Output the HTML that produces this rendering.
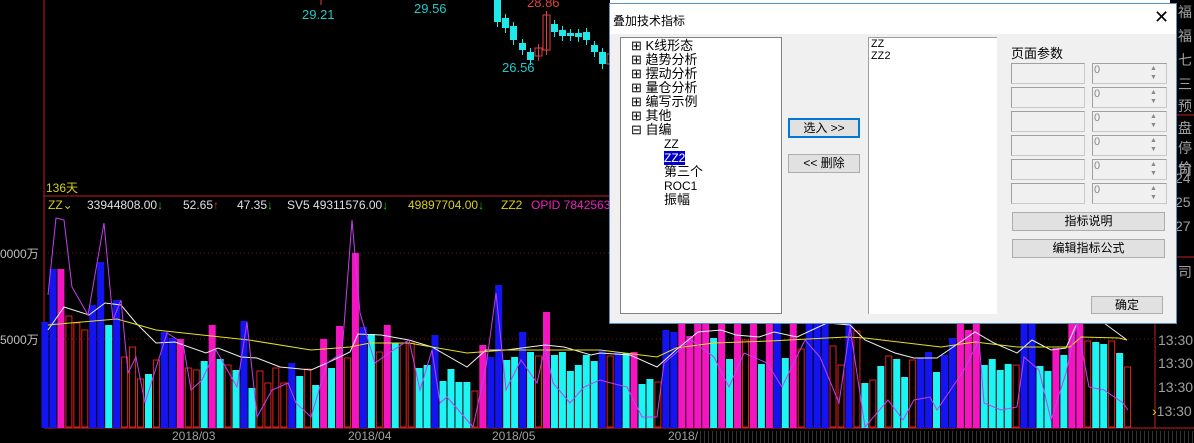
<!DOCTYPE html>
<html><head><meta charset="utf-8">
<style>
*{margin:0;padding:0;box-sizing:border-box}
html,body{width:1194px;height:443px;overflow:hidden}
body{background:#000;position:relative;font-family:"Liberation Sans","Noto Sans CJK SC",sans-serif}
.a{position:absolute;white-space:nowrap}
.dlg{position:absolute;left:609px;top:3px;width:568px;height:321px;background:#f0f0f0;border:1px solid #5a8fc0;font-size:12px;color:#000}
.box{position:absolute;background:#fff;border:1px solid #828282}
.btn{position:absolute;background:#e1e1e1;border:1px solid #adadad;text-align:center;font-size:12px;line-height:17px}
.fld{position:absolute;background:#f0f0f0;border:1px solid #c8c8c8;border-top-color:#a0a0a0;border-left-color:#a0a0a0}
.r{position:absolute;left:1158px;font-size:14px;color:#a0a0a0}
.rc{position:absolute;left:1178px;font-size:14px;color:#a0a0a0}
</style></head><body>
<svg class="a" style="left:0;top:0" width="1194" height="443">
<line x1="44" y1="0" x2="44" y2="428" stroke="#c0201c"/>
<line x1="44" y1="196" x2="1155" y2="196" stroke="#c0201c"/>
<line x1="44" y1="253" x2="1155" y2="253" stroke="#8a1010" stroke-dasharray="1 3"/>
<line x1="44" y1="339" x2="1155" y2="339" stroke="#8a1010" stroke-dasharray="1 3"/>
<line x1="44" y1="428" x2="1194" y2="428" stroke="#c0201c"/>
<line x1="1155" y1="0" x2="1155" y2="428" stroke="#c0201c"/>
<line x1="1155" y1="115" x2="1194" y2="115" stroke="#c0201c"/>
<line x1="1155" y1="257" x2="1194" y2="257" stroke="#c0201c"/>
<line x1="321" y1="0" x2="321" y2="5" stroke="#e04040"/>
<g id="bars"></g>
<g id="cand"></g>
<polyline fill="none" stroke="#f0f0f0" stroke-width="1" points="48,330 64,307 89,315 105,303 121,305 136,323 156,343 175,342 206,353 218,348 241,357 257,358 280,367 311,370 327,363 350,352 358,334 381,335 409,340 432,347 467,367 486,350 506,350 545,345 564,347 591,355 600,353 630,355 657,367 676,350 698,332 721,330 736,335 759,337 774,332 797,337 827,323 850,325 865,340 895,353 914,358 937,358 956,345 975,332 994,343 1017,353 1032,340 1051,350 1066,348 1077,323 1104,323 1127,340"/>
<polyline fill="none" stroke="#e8e020" stroke-width="1" points="48,325 70,323 117,319 156,330 202,335 249,340 311,350 350,347 370,343 409,343 467,353 506,350 600,350 657,357 676,348 714,343 770,341 846,337 865,338 941,347 975,342 1017,347 1070,347 1081,337 1119,338 1127,340"/>
<polyline fill="none" stroke="#c040f0" stroke-width="1" points="48,295 56,218 64,220 72,287 88,315 104,223 113,320 121,300 128,373 136,357 145,403 167,333 183,343 191,390 202,380 216,350 237,387 247,322 257,417 272,390 288,383 296,403 311,417 327,363 342,353 352,220 360,313 375,363 389,353 409,340 420,390 432,350 440,403 447,397 473,427 486,367 496,293 506,390 521,360 537,383 545,347 553,383 570,403 584,387 600,380 611,383 627,387 642,417 657,417 664,363 676,353 691,340 714,357 729,387 744,353 767,363 782,387 805,340 820,357 839,403 850,327 865,427 888,400 903,420 914,400 930,397 937,410 964,370 979,340 984,403 1001,410 1017,407 1024,357 1039,370 1051,420 1066,373 1077,323 1089,387 1104,390 1123,403 1128,410"/>
</svg>
<script>
var L="B322,B269,M269,R316,R323,R330,B305,B262,C325,B300,R357,R347,R379,C374,R360,B332,B338,M339,R368,R370,C361,M325,C359,R365,C370,B321,C388,R371,R383,R368,R383,B363,C376,R369,C385,M339,C368,M326,R358,M253,B327,C334,R352,M325,C343,R343,R343,C368,C365,B335,C381,C369,C382,C382,R391,M345,B357,B285,C360,C357,B332,C352,R356,M312,C355,C352,C371,C365,C355,C361,B350,R356,B352,C353,M352,C384,C379,R382,B330,B332,M300,M336,M300,M300,C338,M300,C359,M300,R340,M300,C364,M300,B300,C358,M300,R349,B300,B300,B300,R346,R365,B300,R331,C383,R380,C366,R356,C359,C377,R360,B358,B352,C372,B355,B338,M300,M330,M300,C365,C359,C370,C364,R365,B300,B300,C366,C371,M348,C355,M300,M300,R341,C342,C344,R341,C353,R367".split(",");
var col={B:"#1414f0",C:"#1ef4f4",M:"#f414c0"},s="";
L.forEach(function(t,i){var x=41.5+7.96*i,y=+t.slice(1),c=t[0];
if(c=="R")s+='<rect x="'+(x+0.5)+'" y="'+y+'" width="6" height="'+(427-y)+'" fill="none" stroke="#e0201c"/>';
else s+='<rect x="'+x+'" y="'+y+'" width="7" height="'+(428-y)+'" fill="'+col[c]+'"/>';});
document.getElementById("bars").innerHTML=s;
var C=[[494,0,22,1],[502,18,28,1],[510,26,40,1],[519,43,50,1],[527,52,60,1],[535,48,56,0],[543,15,50,0],[551,24,32,1],[559,30,36,1],[567,33,36,1],[575,33,37,1],[583,32,40,1],[591,45,52,1],[599,52,64,1],[607,54,64,0]],q="";
C.forEach(function(k){var w=k[3]?'fill="#1ee8e8"':'fill="none" stroke="#e04040"';q+='<line x1="'+(k[0]+3.5)+'" y1="'+(k[1]-4)+'" x2="'+(k[0]+3.5)+'" y2="'+(k[2]+5)+'" stroke="'+(k[3]?"#1ee8e8":"#e04040")+'"/><rect x="'+k[0]+'" y="'+k[1]+'" width="7" height="'+(k[2]-k[1])+'" '+w+'/>';});
document.getElementById("cand").innerHTML=q;
</script>
<div class="a" style="left:302px;top:7px;color:#20c8c8;font-size:13px">29.21</div>
<div class="a" style="left:414px;top:1px;color:#20c8c8;font-size:13px">29.56</div>
<div class="a" style="left:502px;top:60px;color:#20c8c8;font-size:13px">26.56</div>
<div class="a" style="left:527px;top:-5px;color:#e04040;font-size:13px">28.86</div>
<div class="a" style="left:46px;top:179px;color:#d8d020;font-size:12px">136天</div>
<div class="a" style="left:48px;top:198px;font-size:12px;color:#d8d020">ZZ⌄</div>
<div class="a" style="left:87px;top:198px;font-size:12px;color:#e0e0e0">33944808.00<span style="color:#20c020">↓</span></div>
<div class="a" style="left:183px;top:198px;font-size:12px;color:#e0e0e0">52.65<span style="color:#e03030">↑</span></div>
<div class="a" style="left:237px;top:198px;font-size:12px;color:#e0e0e0">47.35<span style="color:#20c020">↓</span></div>
<div class="a" style="left:287px;top:198px;font-size:12px;color:#e0e0e0">SV5 49311576.00<span style="color:#20c020">↓</span></div>
<div class="a" style="left:408px;top:198px;font-size:12px;color:#d8d020">49897704.00<span style="color:#20c020">↓</span></div>
<div class="a" style="left:501px;top:198px;font-size:12px;color:#d8d020">ZZ2</div>
<div class="a" style="left:531px;top:198px;font-size:12px;color:#f020c0">OPID 7842563</div>
<div class="a" style="left:0;top:245px;font-size:12px;color:#c0c0c0">0000万</div>
<div class="a" style="left:0;top:331px;font-size:12px;color:#c0c0c0">5000万</div>
<div class="a" style="left:172px;top:429px;font-size:12px;color:#a0a0a0">2018/03</div>
<div class="a" style="left:348px;top:429px;font-size:12px;color:#a0a0a0">2018/04</div>
<div class="a" style="left:492px;top:429px;font-size:12px;color:#a0a0a0">2018/05</div>
<div class="a" style="left:668px;top:429px;font-size:12px;color:#a0a0a0">2018/</div>
<div class="a" style="left:700px;top:431px;width:494px;height:12px;background:repeating-linear-gradient(90deg,#333 0 1px,#000 1px 4px)"></div>
<div class="r" style="top:284px">:30</div>
<div class="r" style="top:308px">:30</div>
<div class="r" style="top:332px">13:30</div>
<div class="r" style="top:355px">13:30</div>
<div class="r" style="top:379px">13:30</div>
<div class="r" style="top:403px"><span style="color:#d8d020;margin-left:-6px">›</span>13:30</div>
<div class="rc" style="top:2px">福</div><div class="rc" style="top:26px">福</div><div class="rc" style="top:50px">七</div><div class="rc" style="top:74px">三</div><div class="rc" style="top:96px">预</div><div class="rc" style="top:118px">盘</div><div class="rc" style="top:138px">停价</div><div class="rc" style="top:160px">司</div><div class="rc" style="top:170px;left:1175px">24</div><div class="rc" style="top:194px;left:1175px">25</div><div class="rc" style="top:218px;left:1175px">27</div><div class="rc" style="top:262px">司</div>
<div class="a" style="left:610px;top:0;width:560px;height:4px;background:#fff"></div>
<div class="dlg">
<div class="a" style="left:0;top:0;width:566px;height:30px;background:#fff"></div>
<div class="a" style="left:3px;top:8px;font-size:12px">叠加技术指标</div>
<div class="a" style="left:544px;top:3px;font-size:18px;font-weight:300">✕</div>
<div class="box" style="left:10px;top:33px;width:162px;height:277px"></div>
<div class="a" style="left:21px;top:35px;font-size:13px;line-height:14px">
<div>⊞ K线形态</div><div>⊞ 趋势分析</div><div>⊞ 摆动分析</div><div>⊞ 量仓分析</div><div>⊞ 编写示例</div><div>⊞ 其他</div><div>⊟ 自编</div>
<div style="padding-left:33px;font-size:12px">ZZ</div><div style="padding-left:33px;font-size:12px"><span style="background:#0000c8;color:#fff">ZZ2</span></div><div style="padding-left:33px">第三个</div><div style="padding-left:33px;font-size:12px">ROC1</div><div style="padding-left:33px">振幅</div></div>
<div class="btn" style="left:178px;top:114px;width:72px;height:20px;border:2px solid #0078d7">选入 &gt;&gt;</div>
<div class="btn" style="left:178px;top:150px;width:72px;height:19px">&lt;&lt; 删除</div>
<div class="box" style="left:258px;top:33px;width:129px;height:277px;border-color:#a0a0a0;border-right:none;border-bottom:none"></div>
<div class="a" style="left:261px;top:35px;font-size:11px;line-height:12px;font-family:'Liberation Mono',monospace">ZZ<br>ZZ2</div>
<div class="a" style="left:401px;top:39px;font-size:13px">页面参数</div>
<div class="fld" style="left:401px;top:59px;width:74px;height:21px"></div><div class="fld" style="left:482px;top:59px;width:75px;height:21px"></div><div class="a" style="left:484px;top:60px;font-size:11px;color:#888">0</div><div class="a" style="left:540px;top:60px;font-size:7px;color:#888;line-height:9px">▲<br>▼</div>
<div class="fld" style="left:401px;top:83px;width:74px;height:21px"></div><div class="fld" style="left:482px;top:83px;width:75px;height:21px"></div><div class="a" style="left:484px;top:84px;font-size:11px;color:#888">0</div><div class="a" style="left:540px;top:84px;font-size:7px;color:#888;line-height:9px">▲<br>▼</div>
<div class="fld" style="left:401px;top:107px;width:74px;height:21px"></div><div class="fld" style="left:482px;top:107px;width:75px;height:21px"></div><div class="a" style="left:484px;top:108px;font-size:11px;color:#888">0</div><div class="a" style="left:540px;top:108px;font-size:7px;color:#888;line-height:9px">▲<br>▼</div>
<div class="fld" style="left:401px;top:131px;width:74px;height:21px"></div><div class="fld" style="left:482px;top:131px;width:75px;height:21px"></div><div class="a" style="left:484px;top:132px;font-size:11px;color:#888">0</div><div class="a" style="left:540px;top:132px;font-size:7px;color:#888;line-height:9px">▲<br>▼</div>
<div class="fld" style="left:401px;top:155px;width:74px;height:21px"></div><div class="fld" style="left:482px;top:155px;width:75px;height:21px"></div><div class="a" style="left:484px;top:156px;font-size:11px;color:#888">0</div><div class="a" style="left:540px;top:156px;font-size:7px;color:#888;line-height:9px">▲<br>▼</div>
<div class="fld" style="left:401px;top:179px;width:74px;height:21px"></div><div class="fld" style="left:482px;top:179px;width:75px;height:21px"></div><div class="a" style="left:484px;top:180px;font-size:11px;color:#888">0</div><div class="a" style="left:540px;top:180px;font-size:7px;color:#888;line-height:9px">▲<br>▼</div>
<div class="btn" style="left:402px;top:208px;width:153px;height:19px">指标说明</div>
<div class="btn" style="left:402px;top:235px;width:153px;height:19px">编辑指标公式</div>
<div class="btn" style="left:481px;top:292px;width:72px;height:18px">确定</div>
</div>
</body></html>
